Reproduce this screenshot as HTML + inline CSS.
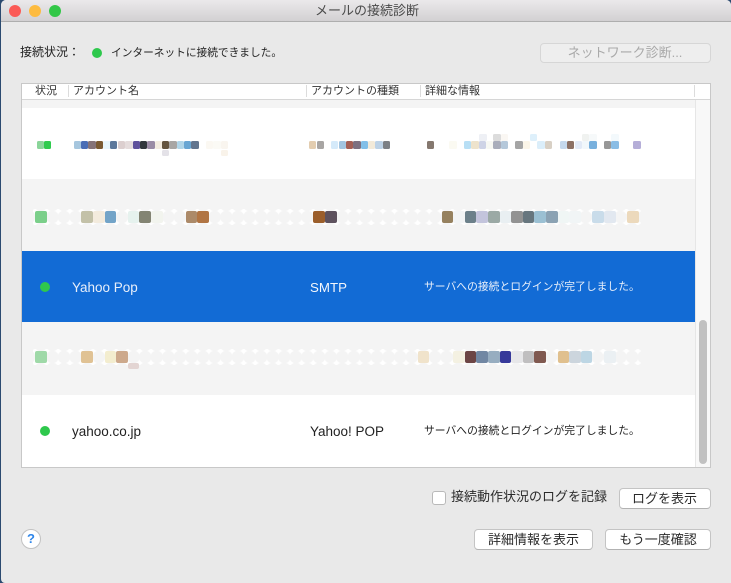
<!DOCTYPE html>
<html lang="ja"><head><meta charset="utf-8"><title>メールの接続診断</title>
<style>
html,body{margin:0;padding:0;width:731px;height:583px;overflow:hidden;background:#2b4a70;}
*{box-sizing:border-box}
#w{position:absolute;left:1px;top:0;width:730px;height:583px;background:#e9e9e9;border-radius:5px 5px 0 4px;overflow:hidden}
#p{position:absolute;left:0;top:0;width:731px;height:583px;font-family:"Liberation Sans","Noto Sans CJK JP",sans-serif;color:#222;}
#p div{position:absolute}
.t{white-space:nowrap;line-height:16px;height:16px}
.h{font-size:11px;top:83px;color:#333}
.sep{top:85px;width:1px;height:12px;background:#dcdcdc}
.dot{width:10px;height:10px;border-radius:50%;background:#2ec84c}
.m{width:7.4px;height:8px;top:141px;border-radius:1.5px}
.u{top:134px;height:6.5px}
.l{top:149.5px;height:6px}
.a{width:11.6px;height:12px;top:211px;border-radius:2px}
.b{width:11.6px;height:12px;top:351px;border-radius:2px}
.band{left:33px;width:608px;height:16px;background-image:radial-gradient(circle 7px at center,#f4f4f4 84%,#fff 96%);background-size:11.6px 12px;background-position:2px 2px}
.btn{background:#fff;border:1px solid #c4c4c4;border-bottom-color:#b2b2b2;border-radius:4px;height:21px;font-size:13px;line-height:19px;text-align:center;color:#2a2a2a;white-space:nowrap}
</style></head><body>
<div id="w"></div>
<div id="p">
<div style="left:1px;top:0;width:730px;height:22px;background:linear-gradient(#ebe9eb,#d2d0d2);border-bottom:1px solid #aeaeae;border-radius:5px 5px 0 0"></div>
<div style="left:9px;top:5px;width:12px;height:12px;border-radius:50%;background:#fb5a56"></div>
<div style="left:29px;top:5px;width:12px;height:12px;border-radius:50%;background:#fdbb40"></div>
<div style="left:49px;top:5px;width:12px;height:12px;border-radius:50%;background:#33c748"></div>
<div class="t" style="left:315px;top:3px;font-size:13px;color:#4a4a4a">メールの接続診断</div>

<div class="t" style="left:20px;top:44px;font-size:12px;color:#222">接続状況：</div>
<div class="dot" style="left:92px;top:48px"></div>
<div class="t" style="left:111px;top:45px;font-size:10.7px;color:#222">インターネットに接続できました。</div>
<div style="left:539.5px;top:42.5px;width:171px;height:20.5px;background:#eeeeee;border:1px solid #d6d6d6;border-radius:4px;font-size:13px;line-height:18px;text-align:center;color:#a9a9a9;white-space:nowrap">ネットワーク診断...</div>

<!-- table -->
<div style="left:21px;top:83px;width:690px;height:385px;background:#fff;border:1px solid #c8c8c8"></div>
<div style="left:22px;top:84px;width:688px;height:15px;background:#fff"></div>
<div style="left:22px;top:99px;width:688px;height:1px;background:#d6d6d6"></div>
<div style="left:22px;top:100px;width:673px;height:8px;background:#f4f4f4"></div>
<div class="sep" style="left:68px"></div>
<div class="sep" style="left:306px"></div>
<div class="sep" style="left:420px"></div>
<div class="sep" style="left:694px"></div>
<div class="t h" style="left:35px">状況</div>
<div class="t h" style="left:73px">アカウント名</div>
<div class="t h" style="left:311px">アカウントの種類</div>
<div class="t h" style="left:425px">詳細な情報</div>

<div style="left:22px;top:179px;width:673px;height:72px;background:#f4f4f4"></div>
<div style="left:22px;top:251px;width:673px;height:71px;background:#126bd5"></div>
<div style="left:22px;top:322px;width:673px;height:73px;background:#f4f4f4"></div>

<!-- scrollbar -->
<div style="left:695px;top:100px;width:15px;height:367px;background:#f8f8f8;border-left:1px solid #e6e6e6"></div>
<div style="left:699px;top:320px;width:8px;height:144px;border-radius:4px;background:#c1c1c1"></div>

<!-- row 1 mosaic -->
<div class="m" style="left:37px;background:#8bd59a"></div><div class="m" style="left:44px;background:#2fcb4e"></div>
<div class="m" style="left:74px;background:#a6c6de"></div><div class="m" style="left:81px;background:#4a6db5"></div><div class="m" style="left:88.3px;background:#857378"></div><div class="m" style="left:95.7px;background:#7a5a32"></div><div class="m" style="left:103.3px;background:#e8f6fb"></div><div class="m" style="left:110px;background:#5d789b"></div><div class="m" style="left:117.7px;background:#dccfcf"></div><div class="m" style="left:125.3px;background:#e5dcdc"></div><div class="m" style="left:132.7px;background:#5f519b"></div><div class="m" style="left:140px;background:#30363b"></div><div class="m" style="left:147.3px;background:#9a8ca5"></div><div class="m" style="left:155px;background:#f3ece0"></div><div class="m" style="left:162px;background:#65553f"></div><div class="m" style="left:169.3px;background:#a8a6a4"></div><div class="m" style="left:177px;background:#b0d5e8"></div><div class="m" style="left:184px;background:#68a6d3"></div><div class="m" style="left:191.3px;background:#62758f"></div><div class="m" style="left:206px;background:#fbf8f2"></div><div class="m" style="left:213.3px;background:#fbfaf5"></div><div class="m" style="left:221px;background:#f9f5ef"></div>
<div class="m l" style="left:162px;background:#e4e2e8"></div><div class="m l" style="left:221px;background:#f9f3ea"></div>
<div class="m" style="left:309px;background:#e3cdb0"></div><div class="m" style="left:316.7px;background:#a8a5a3"></div><div class="m" style="left:331px;background:#d5eafa"></div><div class="m" style="left:338.7px;background:#a2c4e0"></div><div class="m" style="left:346px;background:#a45f55"></div><div class="m" style="left:353.3px;background:#7d7080"></div><div class="m" style="left:360.7px;background:#82bfe8"></div><div class="m" style="left:368px;background:#f3ead9"></div><div class="m" style="left:375.3px;background:#bdd2e6"></div><div class="m" style="left:382.7px;background:#7c8085"></div>
<div class="m" style="left:426.7px;background:#85786f"></div><div class="m" style="left:449.3px;background:#fbfaf2"></div><div class="m" style="left:463.7px;background:#b8dff5"></div><div class="m" style="left:471.3px;background:#eee3cc"></div><div class="m" style="left:478.7px;background:#ced3e6"></div><div class="m" style="left:486px;background:#f7f8f3"></div><div class="m" style="left:493.3px;background:#a9adbb"></div><div class="m" style="left:500.7px;background:#b5c8da"></div><div class="m" style="left:515.3px;background:#a5a5a5"></div><div class="m" style="left:522.7px;background:#fbf5e8"></div><div class="m" style="left:537.3px;background:#dbeefa"></div><div class="m" style="left:544.7px;background:#d8d0c5"></div><div class="m" style="left:560px;background:#c5d8ec"></div><div class="m" style="left:566.7px;background:#8c7165"></div><div class="m" style="left:574.7px;background:#e2eaf7"></div><div class="m" style="left:582px;background:#f1f7fb"></div><div class="m" style="left:589.3px;background:#78b0dd"></div><div class="m" style="left:604px;background:#979797"></div><div class="m" style="left:611.3px;background:#8abde5"></div><div class="m" style="left:633.3px;background:#b5aed8"></div>
<div class="m u" style="left:479.3px;background:#eef0f5"></div><div class="m u" style="left:493.3px;background:#dcdcdc"></div><div class="m u" style="left:500.7px;background:#faf7f3"></div><div class="m u" style="left:530px;background:#def0fb"></div><div class="m u" style="left:582px;background:#f0f2f0"></div><div class="m u" style="left:589.3px;background:#f6f9fa"></div><div class="m u" style="left:611.3px;background:#f3f9fc"></div>

<!-- row 2 mosaic -->
<div class="band" style="top:209px"></div>
<div class="a" style="left:35px;background:#7bcf8a"></div><div class="a" style="left:81.4px;background:#c3c1a8"></div><div class="a" style="left:93px;background:#f3ebdd"></div><div class="a" style="left:104.6px;background:#73a4c8"></div><div class="a" style="left:127.8px;background:#e6f2ee"></div><div class="a" style="left:139.4px;background:#838473"></div><div class="a" style="left:151px;background:#f2f4ee"></div><div class="a" style="left:185.8px;background:#ac8a69"></div><div class="a" style="left:197.4px;background:#b17544"></div><div class="a" style="left:313.4px;background:#9b5e2b"></div><div class="a" style="left:325px;background:#5e525e"></div><div class="a" style="left:441.6px;background:#96815f"></div><div class="a" style="left:453.2px;background:#f2f4f5"></div><div class="a" style="left:464.8px;background:#6c808a"></div><div class="a" style="left:476.4px;background:#c3c4dc"></div><div class="a" style="left:488px;background:#9ba9a5"></div><div class="a" style="left:499.6px;background:#e9eff2"></div><div class="a" style="left:511.2px;background:#929292"></div><div class="a" style="left:522.8px;background:#67767e"></div><div class="a" style="left:534.4px;background:#9bc0d3"></div><div class="a" style="left:546px;background:#8ba2b3"></div><div class="a" style="left:557.6px;background:#f0f6f5"></div><div class="a" style="left:569.2px;background:#f1f5f6"></div><div class="a" style="left:592.4px;background:#c9dcea"></div><div class="a" style="left:604px;background:#e2e8f0"></div><div class="a" style="left:627.2px;background:#ecd9bc"></div>

<!-- row 3 -->
<div class="dot" style="left:40px;top:282px;background:#2fc84c"></div>
<div class="t" style="left:72px;top:280px;font-size:13.5px;color:#e8effa">Yahoo Pop</div>
<div class="t" style="left:310px;top:280px;font-size:13.3px;color:#f2f6fc">SMTP</div>
<div class="t" style="left:424px;top:279px;font-size:10.8px;color:#e8effa">サーバへの接続とログインが完了しました。</div>

<!-- row 4 mosaic -->
<div class="band" style="top:349px"></div>
<div class="b" style="left:35px;background:#9fd9a8"></div><div class="b" style="left:81.4px;background:#e0c294"></div><div class="b" style="left:104.6px;background:#f3edcf"></div><div class="b" style="left:116.2px;background:#cda98c"></div><div class="b" style="left:127.8px;top:362.5px;height:6.5px;background:#e3d5d3"></div><div class="b" style="left:417.8px;background:#f0e3cb"></div><div class="b" style="left:453.2px;background:#f4f1e2"></div><div class="b" style="left:464.8px;background:#6c4545"></div><div class="b" style="left:476.4px;background:#7187a3"></div><div class="b" style="left:488px;background:#97adc0"></div><div class="b" style="left:499.6px;background:#36399a"></div><div class="b" style="left:511.2px;background:#e7e7e9"></div><div class="b" style="left:522.8px;background:#c0bfc0"></div><div class="b" style="left:534.4px;background:#805950"></div><div class="b" style="left:557.6px;background:#e0c08e"></div><div class="b" style="left:569.2px;background:#ccd5dd"></div><div class="b" style="left:580.8px;background:#bdd6e4"></div><div class="b" style="left:604px;background:#ebf0f3"></div>

<!-- row 5 -->
<div class="dot" style="left:40px;top:426px;background:#2ec84c"></div>
<div class="t" style="left:72px;top:424px;font-size:13.5px;color:#222">yahoo.co.jp</div>
<div class="t" style="left:310px;top:424px;font-size:13.5px;color:#222">Yahoo! POP</div>
<div class="t" style="left:424px;top:423px;font-size:10.8px;color:#222">サーバへの接続とログインが完了しました。</div>

<!-- bottom controls -->
<div style="left:432px;top:491px;width:14px;height:14px;background:#fff;border:1px solid #b9b9b9;border-radius:3px"></div>
<div class="t" style="left:451px;top:489px;font-size:13px;color:#2a2a2a">接続動作状況のログを記録</div>
<div class="btn" style="left:618.5px;top:488px;width:92px">ログを表示</div>
<div class="btn" style="left:474px;top:529px;width:119px">詳細情報を表示</div>
<div class="btn" style="left:605px;top:529px;width:106px">もう一度確認</div>
<div style="left:21px;top:528.5px;width:20px;height:20px;border-radius:50%;background:#fff;border:1px solid #c2c2c2;font-size:13px;line-height:18px;text-align:center;color:#2f86ea;font-weight:bold">?</div>
</div>
</body></html>
